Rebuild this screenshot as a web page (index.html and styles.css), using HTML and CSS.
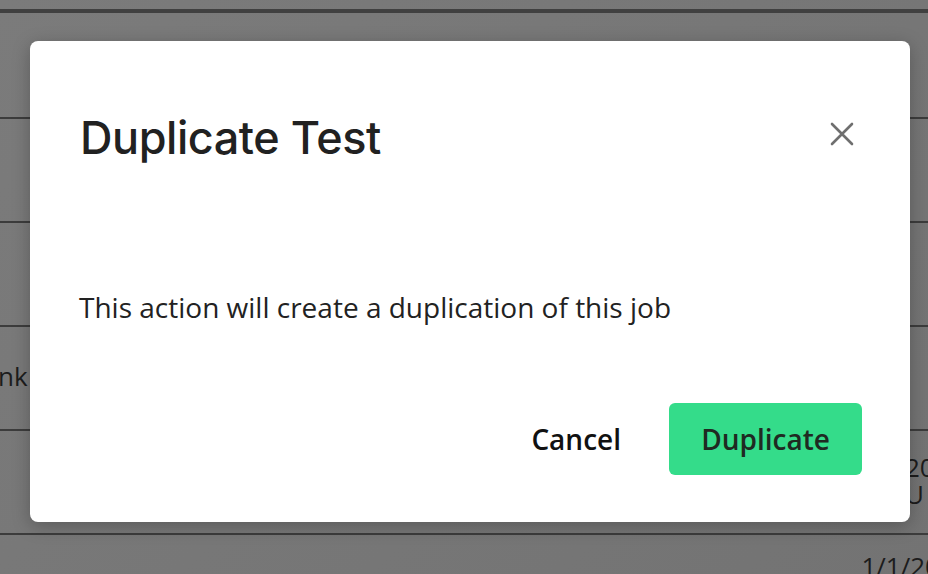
FILE: index.html
```html
<!DOCTYPE html>
<html>
<head>
<meta charset="utf-8">
<link rel="stylesheet" href="styles.css">
</head>
<body>
<div class="page">
  <div class="table">
    <div class="head"></div>
    <div class="row first"></div>
    <div class="row"></div>
    <div class="row"></div>
    <div class="row"><span class="cell-left">nk</span></div>
    <div class="row right"><span class="cell-right">20<br>U</span></div>
    <div class="row right last"><span class="cell-date">1/1/20</span></div>
  </div>
  <div class="modal">
    <div class="modal-header">
      <h1 class="modal-title">Duplicate Test</h1>
      <button class="close" aria-label="Close">
        <svg width="24" height="24" viewBox="0 0 24 24"><path d="M2 2 L22 22 M22 2 L2 22" stroke="#6f6f6f" stroke-width="2.6" stroke-linecap="round" fill="none"/></svg>
      </button>
    </div>
    <p class="modal-body">This action will create a duplication of this job</p>
    <div class="modal-footer">
      <button class="btn-cancel">Cancel</button>
      <button class="btn-primary">Duplicate</button>
    </div>
  </div>
</div>
</body>
</html>
```
FILE: styles.css
```css
html, body {
  margin: 0;
  padding: 0;
}
body {
  width: 928px;
  height: 574px;
  overflow: hidden;
  font-family: "Open Sans", "Noto Sans", sans-serif;
}
.page {
  position: relative;
  width: 928px;
  height: 574px;
  background: linear-gradient(135deg, #7b7b7b 0%, #737373 100%);
  overflow: hidden;
}
.table {
  display: flex;
  flex-direction: column;
}
.head {
  height: 9px;
  border-bottom: 4px solid #404040;
}
.row {
  height: 102px;
  border-bottom: 2px solid #3c3c3c;
  display: flex;
  align-items: center;
  font-size: 26px;
  color: #1c1c1c;
}
.row.first {
  height: 104px;
}
.row.right {
  justify-content: flex-end;
}
.row.last {
  border-bottom: none;
  align-items: flex-start;
}
.cell-left {
  margin-left: -2px;
  position: relative;
  top: -2px;
}
.cell-right {
  line-height: 27px;
  margin-right: -8px;
  width: 31px;
  position: relative;
  top: -1px;
}
.cell-date {
  margin-right: -12px;
  margin-top: 13px;
}
.modal {
  position: absolute;
  left: 30px;
  top: 41px;
  width: 880px;
  height: 481px;
  box-sizing: border-box;
  background: #fff;
  border-radius: 8px;
  box-shadow: 0 4px 18px rgba(0,0,0,0.25);
  padding: 0 48px 47px 50px;
  display: flex;
  flex-direction: column;
}
.modal-header {
  display: flex;
  align-items: center;
  justify-content: space-between;
  height: 196px;
}
.modal-title {
  margin: 0;
  font-family: "Inter", sans-serif;
  font-weight: 500;
  font-size: 45px;
  letter-spacing: -0.45px;
  color: #212121;
  position: relative;
  top: -2px;
}
.close {
  border: none;
  background: none;
  padding: 0;
  width: 24px;
  height: 24px;
  margin-right: 8px;
  position: relative;
  top: -5px;
  cursor: pointer;
}
.close svg { display: block; }
.modal-body {
  margin: 52px 0 0 -1px;
  font-size: 28px;
  color: #222;
  line-height: 36px;
}
.modal-footer {
  margin-top: auto;
  display: flex;
  justify-content: flex-end;
  align-items: center;
  gap: 48px;
}
.btn-cancel {
  border: none;
  background: none;
  padding: 0;
  font-family: "Open Sans", sans-serif;
  font-weight: 600;
  font-size: 28px;
  color: #111;
}
.btn-primary {
  border: none;
  background: #34dc8a;
  border-radius: 6px;
  width: 193px;
  height: 72px;
  font-family: "Open Sans", sans-serif;
  font-weight: 600;
  font-size: 28px;
  color: #1f2a22;
}
```
